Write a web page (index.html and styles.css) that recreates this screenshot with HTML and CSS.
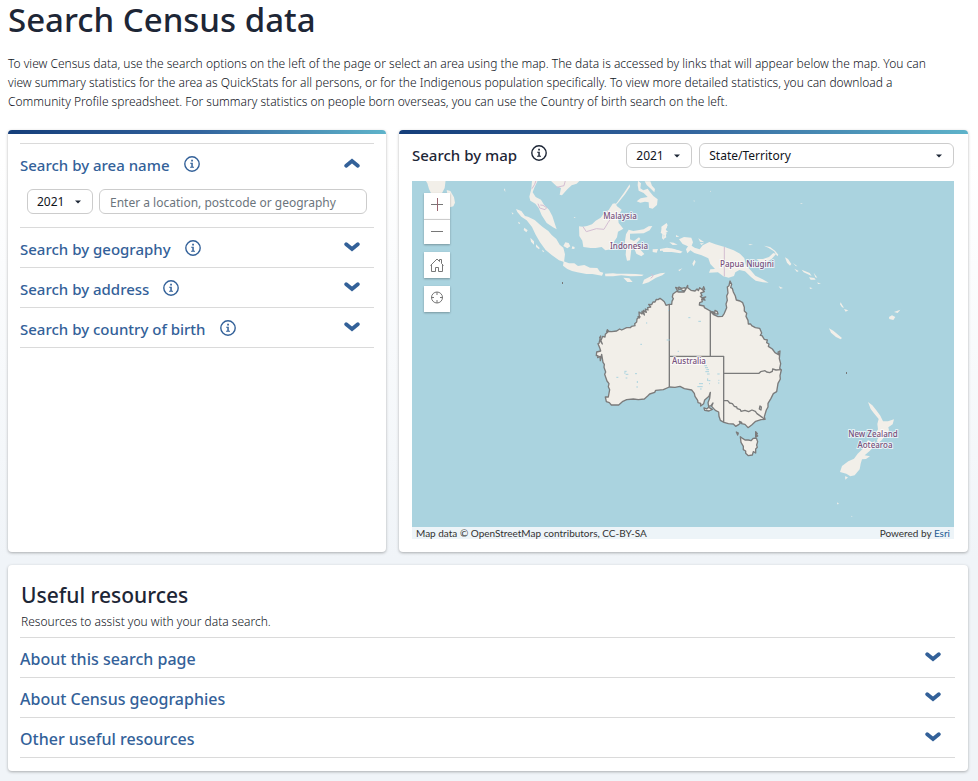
FILE: index.html
```html
<!DOCTYPE html>
<html lang="en">
<head>
<meta charset="utf-8">
<meta name="viewport" content="width=device-width, initial-scale=1">
<title>Search Census data</title>
<link rel="stylesheet" href="styles.css">
</head>
<body>
<svg class="defs" width="0" height="0" aria-hidden="true">
  <symbol id="info" viewBox="0 0 16 16"><circle cx="8" cy="8" r="7.2" fill="none" stroke="currentColor" stroke-width="1.4"/><path d="M7.2 3.8h1.7v1.6H7.2zM6.2 6.7h2.6v4h1.2v1H6.1v-1h1.2V7.7H6.200z" fill="currentColor"/></symbol>
  <symbol id="chevron" viewBox="0 0 16 10"><path d="M2.200 2.300 8 7l5.800-4.700" fill="none" stroke="currentColor" stroke-width="3.800" stroke-linecap="round"/></symbol>
  <symbol id="caret" viewBox="0 0 6 4"><path d="M0 .5h6L3 3.500z" fill="currentColor"/></symbol>
</svg>
<main class="page">
  <h1>Search Census data</h1>
  <p class="intro">To view Census data, use the search options on the left of the page or select an area using the map. The data is accessed by links that will appear below the map. You can view summary statistics for the area as QuickStats for all persons, or for the Indigenous population specifically. To view more detailed statistics, you can download a Community Profile spreadsheet. For summary statistics on people born overseas, you can use the Country of birth search on the left.</p>

  <div class="columns">
    <section class="card card-bar">
      <div class="accordion">
        <div class="item">
          <div class="row">
            <h3><button type="button" aria-expanded="true">Search by area name</button></h3>
            <button type="button" class="info" aria-label="Information"><svg><use href="#info"/></svg></button>
            <button type="button" class="chevron up" aria-label="Collapse"><svg><use href="#chevron"/></svg></button>
          </div>
          <div class="fields">
            <div class="select year"><select aria-label="Census year"><option>2021</option></select><svg><use href="#caret"/></svg></div>
            <input type="text" aria-label="Area name" placeholder="Enter a location, postcode or geography">
          </div>
        </div>
        <div class="item">
          <div class="row">
            <h3><button type="button" aria-expanded="false">Search by geography</button></h3>
            <button type="button" class="info" aria-label="Information"><svg><use href="#info"/></svg></button>
            <button type="button" class="chevron" aria-label="Expand"><svg><use href="#chevron"/></svg></button>
          </div>
        </div>
        <div class="item">
          <div class="row">
            <h3><button type="button" aria-expanded="false">Search by address</button></h3>
            <button type="button" class="info" aria-label="Information"><svg><use href="#info"/></svg></button>
            <button type="button" class="chevron" aria-label="Expand"><svg><use href="#chevron"/></svg></button>
          </div>
        </div>
        <div class="item">
          <div class="row">
            <h3><button type="button" aria-expanded="false">Search by country of birth</button></h3>
            <button type="button" class="info" aria-label="Information"><svg><use href="#info"/></svg></button>
            <button type="button" class="chevron" aria-label="Expand"><svg><use href="#chevron"/></svg></button>
          </div>
        </div>
      </div>
    </section>

    <section class="card card-bar">
      <div class="map-head">
        <h2>Search by map</h2>
        <button type="button" class="info" aria-label="Information"><svg><use href="#info"/></svg></button>
        <div class="select year"><select aria-label="Map year"><option>2021</option></select><svg><use href="#caret"/></svg></div>
        <div class="select layer"><select aria-label="Geography"><option>State/Territory</option></select><svg><use href="#caret"/></svg></div>
      </div>
      <div class="map">
        <svg class="map-canvas" viewBox="412 181 542 346" role="img" aria-label="Map of Australia and its region">
          <!-- South and south-east Asia -->
          <g class="land" transform="translate(390 120) scale(.33333)">
            <path d="M106 180H167L164 204 155 221H124L117 207 112 190zM170 210 181 213 192 232 195 248 190 259 180 262 175 240z"/>
            <path d="M426 182H443L433 203 428 217 437 231 453 239 462 254 477 269 487 288 494 310 500 328 489 322 470 309 455 286 446 264 436 251 421 242 418 230 424 207z"/>
            <path d="M482 182H569L560 191 545 196 532 208 516 226 509 224 513 204 500 199z"/>
            <path d="M378 267 394 273 405 288 414 290 434 300 450 314 459 322 475 333 485 345 499 357 509 374 520 383 525 403 522 426 507 421 486 406 467 390 450 367 437 344 426 321 410 301 394 290 382 276z"/>
            <path d="M521 424 537 430 553 430 564 438 583 435 600 443 622 444 630 455 640 458 636 467 607 462 589 462 562 457 546 453 532 447 519 437z"/>
            <path d="M567 319 578 320 591 318 606 313 617 302 632 293 645 276 656 270 668 251 676 250 681 259 695 269 690 279 684 290 686 309 700 326 684 335 681 352 672 365 664 388 646 391 635 381 617 384 602 384 580 381 577 362 568 348z"/>
            <path d="M708 343 716 329 730 333 761 328 776 319 787 318 779 331 761 340 720 341 720 358 732 363 747 352 751 357 739 370 746 383 763 402 754 409 739 401 732 383 724 388 720 421 711 422 707 404 709 382 704 370z"/>
            <path d="M744 182 753 190 751 205 760 211 773 206 780 216 790 228 803 238 801 255 788 266 777 263 776 247 765 245 751 248 740 244 752 235 773 231 761 219 746 212 743 196zM764 184H781L786 197 795 207 793 217 780 204 770 195z"/>
            <path d="M669 263 682 246 702 218 719 193 720 200 705 223 684 249z"/>
            <path d="M645 461 669 460 681 461 709 461 738 462 761 464 756 468 722 469 694 466 669 469 646 469zM700 473 718 475 728 486 712 486zM762 479 784 468 811 460 826 458 817 466 798 473 776 487 757 493z"/>
            <path d="M526 367 536 369 541 379 532 385 520 378zM547 379 554 381 553 387 545 386zM816 325 823 328 830 313 831 321 823 335 830 340 827 348 821 344 822 360 816 355 817 342 812 338zM816 389 844 386 867 391 878 395 871 400 845 396 820 396zM788 388 804 387 800 398 788 396zM838 367 851 368 863 374 848 375z"/>
            <path d="M384 305 391 309 387 313zM403 323 413 331 409 337 401 330zM421 353 432 364 432 374 423 365zM438 373 449 384 447 388 438 381zM551 291 557 291 554 294zM456 389 463 394 459 397zM365 276 371 282 367 283zM345 205 346 216 342 209z"/>
          </g>
          <!-- New Guinea and the Pacific islands -->
          <g class="land" transform="translate(660 175) scale(.33333)">
            <path d="M57 193 72 186 94 188 99 202 95 212 104 218 119 223 128 211 148 201 166 208 194 216 221 226 240 236 253 250 258 271 274 288 286 302 308 313 326 323 309 322 287 317 273 306 255 289 238 285 226 292 222 303 206 308 190 304 174 292 147 293 151 283 165 282 151 267 145 250 125 241 103 234 91 226 82 235 78 223 84 214 68 207z"/>
            <path d="M289 252 309 252 327 246 340 234 348 237 335 252 318 262 300 260zM312 212 330 216 345 227 355 239 352 244 342 229 326 219zM375 247 384 252 394 267 390 272 381 263zM399 264 412 274 407 273zM425 284 449 294 455 303 431 292zM447 307 463 309 467 314 452 314zM461 293 472 308 466 307zM472 322 483 327 474 327zM403 281 416 288 411 291z"/>
            <path d="M0 222 21 218 40 221 55 227 36 231 13 226 0 228zM4 155 20 144 23 151 17 164 24 170 16 174 19 187 11 192 14 176 5 168zM103 254 107 260 101 274 97 266zM115 190 133 202 120 200zM120 205 132 205 124 210zM48 180 58 185 48 186zM55 285 67 280 58 289zM265 208 279 208 270 211zM331 330 338 334zM356 334 369 339 361 341z"/>
            <path d="M507 460 520 467 546 489 542 493 528 486 513 473zM542 382 547 391 552 398 546 397 540 388zM552 402 565 406 557 410zM559 427 563 437zM573 448 580 456zM552 372 554 383zM687 426 696 421 706 426 700 435 688 432zM702 411 721 404 713 414zM530 325 534 331zM449 337 458 340 450 342zM575 438 577 443zM549 467 557 470zM102 74 104 80 101 79zM150 47 153 49 150 51zM422 84 429 87 422 87z"/>
          </g>
          <!-- New Zealand -->
          <g class="land" transform="translate(820 380) scale(.33333)">
            <path d="M144 66 157 76 169 91 181 107 189 124 204 124 222 118 218 133 205 142 207 151 199 162 185 181 174 190 171 181 178 168 166 161 174 148 172 132 176 117 163 101 152 87zM144 180 158 188 165 181 160 201 149 213 134 226 150 229 138 237 126 238 122 251 119 268 104 286 91 289 79 281 60 276 66 258 85 244 102 236 113 221 130 205zM75 289 84 292 76 299zM52 367 57 372 51 373zM94 407 98 410 94 410z"/>
          </g>
          <g class="boundary" transform="translate(390 120) scale(.33333)">
            <path d="M438 182 434 193 426 206M444 251 449 264 465 269 470 263 459 256 451 255M500 202 522 197 526 182M579 320 589 335 619 326 642 328 654 308 671 283 655 291 652 272M784 462 790 468 782 475M1003 381V469"/>
          </g>
          <path class="island-dot" d="M562 282h1v2h-1zM846 372h1v2h-1z"/>
          <!-- Australian states and territories -->
          <g class="states" transform="translate(585 275) scale(.33333)">
            <path d="M253 88 243 91 238 80 232 75 225 70 219 74 214 73 210 81 204 81 200 89 191 88 197 96 188 98 189 105 181 102 184 112 175 106 178 120 171 109 171 117 162 111 163 125 156 132 155 141 149 146 150 152 140 154 136 158 125 158 110 165 104 162 95 168 80 170 71 169 61 178 60 186 53 184 47 199 52 207 44 188 47 183 42 205 39 206 44 218 47 228 35 231 34 242 39 242 38 248 45 244 46 257 50 238 54 262 58 268 57 277 62 291 59 298 66 318 72 326 70 335 74 344 70 366 61 366 64 380 73 383 79 390 101 390 112 380 125 374 145 372 160 374 178 372 188 363 194 357 209 352 212 346 235 344 253 336 270 337 285 334 298 341 320 345 328 355 330 364 338 376 339 383 347 385 347 393 356 386 359 375 372 364 376 352 374 370 369 383 371 394 378 392 384 384 380 394 391 406 401 411 402 424 406 436 417 442 430 446 445 447 452 454 462 448 466 445 463 439 470 442 470 446 480 448 489 458 500 450 512 439 528 434 540 433 538 425 544 405 549 396 549 385 558 370 565 356 575 350 579 325 586 312 585 302 589 285 584 280 587 266 583 251 584 239 585 228 579 231 582 240 570 233 562 222 550 214 552 207 545 203 547 195 538 193 531 182 526 181 530 174 524 160 511 158 500 152 497 147 490 147 489 136 483 124 485 115 478 108 478 97 473 83 465 78 454 75 451 63 445 51 442 40 437 38 440 28 435 18 432 32 427 36 429 54 425 63 427 76 423 87 425 98 418 115 412 124 399 125 386 119 379 112 384 110 390 116 399 117 397 110 390 106 389 116 376 108 358 98 357 93 343 90 344 83 352 80 350 73 360 75 355 71 362 66 351 69 346 64 351 62 347 54 358 50 354 46 359 43 356 35 352 44 344 38 340 47 336 42 330 48 318 46 308 38 308 31 302 43 300 38 290 40 282 36 281 40 272 37 277 46 285 42 296 48 302 44 297 51 281 51 275 49 264 57 262 66 265 71 261 79 260 88 254 88z"/>
            <path d="M466 485 474 491 480 495 490 495 498 497 505 490 514 489 518 500 515 510 517 517 512 522 512 534 505 530 502 540 490 542 482 535 482 528 475 524 475 514 468 502zM357 399 365 402 371 397 382 403 372 408 359 406zM454 471 460 474 458 480zM512 470 517 476 513 477 518 483 512 485zM525 393 529 396 528 405 523 402zM65 171 67 164 70 168zM163 129 159 125 165 125z"/>
            <path fill="none" d="M253 88V336M253 244H416V442M376 108V244M416 295H522L527 290 540 287 545 291 554 293 562 289 563 282 573 285 589 284M417 376 428 377 434 384 442 386 448 394 455 396 457 401 466 404 468 409 480 406 491 410 501 405 511 409 516 416 540 433"/>
          </g>
          <g class="lakes" transform="translate(585 275) scale(.33333)"><path d="M358 272h8M360 278h9M364 284h8M361 290h11M366 297h8M368 310v8M370 317h6M342 326h12M337 335h16M372 326h3M345 342h5M397 297h7M400 316h3M399 324h4M118 289h7M122 298h8M117 294h5M150 296h6M94 307h6M122 309h5M310 128h6M340 139h8M245 195h9M166 208h5M249 106h3M278 229h4M157 318v6M154 336h5M185 142v4"/></g>
          <g class="labels">
            <text x="620" y="219">Malaysia</text>
            <text x="629" y="249">Indonesia</text>
            <text x="747" y="267">Papua Niugini</text>
            <text x="689" y="364">Australia</text>
            <text x="873" y="437">New Zealand</text>
            <text x="875" y="448">Aotearoa</text>
          </g>
        </svg>
        <div class="map-tools">
          <div class="zoom">
            <button type="button" aria-label="Zoom in"><svg viewBox="0 0 16 16"><path d="M2 6.500h12" stroke="#777"/><path d="M8.500 0v13" stroke="#9a6670"/></svg></button>
            <button type="button" aria-label="Zoom out"><svg viewBox="0 0 16 16"><path d="M2 7.500h12" stroke="#777"/></svg></button>
          </div>
          <button type="button" aria-label="Default map view"><svg viewBox="0 0 16 16"><path d="M1.500 8.500 8 2l2.500 2.500V2.500h2v4l2 2M2.500 7.500v7h4v-4h3v4h4v-7" fill="none" stroke="#777"/></svg></button>
          <button type="button" aria-label="Find my location"><svg viewBox="0 0 16 16"><circle cx="8" cy="6.500" r="5.500" fill="none" stroke="#777"/><path d="M8 1v3M8 9v3M2 6.500h3M11 6.500h3" stroke="#777"/></svg></button>
        </div>
        <div class="attribution"><span>Map data © OpenStreetMap contributors, CC-BY-SA</span><span>Powered by <a href="#">Esri</a></span></div>
      </div>
    </section>
  </div>

  <section class="card resources">
    <h2>Useful resources</h2>
    <p>Resources to assist you with your data search.</p>
    <div class="accordion">
      <div class="item"><div class="row"><h3><button type="button" aria-expanded="false">About this search page</button></h3><button type="button" class="chevron" aria-label="Expand"><svg><use href="#chevron"/></svg></button></div></div>
      <div class="item"><div class="row"><h3><button type="button" aria-expanded="false">About Census geographies</button></h3><button type="button" class="chevron" aria-label="Expand"><svg><use href="#chevron"/></svg></button></div></div>
      <div class="item"><div class="row"><h3><button type="button" aria-expanded="false">Other useful resources</button></h3><button type="button" class="chevron" aria-label="Expand"><svg><use href="#chevron"/></svg></button></div></div>
    </div>
  </section>
</main>
</body>
</html>
```
FILE: styles.css
```css
* { box-sizing: border-box; }

body {
  margin: 0;
  font: 300 12px/19px "Noto Sans", sans-serif;
  color: #10141c;
  background: #f0f4f8 linear-gradient(#fff 0, #fff 160px, #f0f4f8 560px) no-repeat;
}

h1, h2, h3, p { margin: 0; }
h1, h2 { color: #1d2636; }

button {
  padding: 0;
  border: 0;
  background: none;
  font: inherit;
  color: inherit;
  cursor: pointer;
}

.defs { display: block; }

.page { padding: 0 10px 11px 8px; }

h1 { font-size: 33px; line-height: 40px; font-weight: 500; }

.intro { margin: 14px 0 19px; padding-right: 20px; }

.columns {
  display: grid;
  grid-template-columns: 378fr 569fr;
  gap: 13px;
  margin-bottom: 13px;
}

.card {
  background: #fff;
  border-radius: 4px;
  box-shadow: 0 1px 3px rgba(0, 0, 0, .3);
  overflow: hidden;
  padding: 13px 14px 13px 13px;
}

.card-bar { padding-top: 0; }

.card-bar::before {
  content: "";
  display: block;
  height: 4px;
  margin: 0 -14px 0 -13px;
  background: linear-gradient(90deg, #153e7a, #32639d 50%, #5eb3ca);
}

.accordion { border-top: 1px solid #dadada; margin: 0 -1px; color: #336199; }
.card-bar .accordion { margin: 9px -2px 0 -1px; }
.item { border-bottom: 1px solid #dadada; }

.row { display: flex; align-items: center; height: 39px; }
.row h3 { font-size: 15px; line-height: 24px; font-weight: 500; padding-top: 2px; }

.info { display: flex; margin-left: 14px; }
.info svg { width: 16px; height: 16px; }

.chevron { display: flex; margin-left: auto; padding: 0 14px 2px 0; }
.chevron svg { width: 16px; height: 10px; }
.up svg { transform: rotate(180deg); }

.fields { display: flex; gap: 6px; padding: 6px 7px 13px; }

.select { display: grid; grid-template-columns: 1fr 6px 12px; align-items: center; }
.select select { grid-area: 1 / 1 / 2 / 4; }
.select svg { grid-area: 1 / 2; width: 6px; height: 4px; color: #1d2636; pointer-events: none; }
.year { width: 66px; }

select, input {
  appearance: none;
  min-width: 0;
  width: 100%;
  height: 25px;
  margin: 0;
  padding: 1px 9px 0;
  border: 1px solid #ccc;
  border-radius: 6px;
  background: #fff;
  font: 400 12px/20px "Noto Sans", sans-serif;
  color: #10141c;
}

.fields input { flex: 1; padding-left: 10px; }
input::placeholder { color: #6c757d; opacity: 1; }

.map-head { display: flex; align-items: flex-start; height: 47px; padding-top: 9px; }
.map-head h2 { font-size: 15px; line-height: 24px; font-weight: 500; }
.map-head .info { margin-top: 2px; color: #1d2636; }
.map-head .year { margin: 0 7px 0 auto; }
.layer { width: 47%; }

.map { position: relative; display: flex; flex-direction: column; background: #aad3df; }
.map-canvas { display: block; width: 100%; }
.land { fill: #f2efe9; }
.boundary { fill: none; stroke: #d3bdd2; stroke-width: 3; }
.island-dot { fill: #777; }
.states { fill: #f2efe9; stroke: #7b7b7b; stroke-width: 4; stroke-linejoin: round; }
.lakes { stroke: #aad3df; stroke-width: 3; }
.labels {
  font: 500 8px "Noto Sans", sans-serif;
  text-anchor: middle;
  fill: #77507b;
  stroke: #fff;
  stroke-opacity: .7;
  stroke-width: 2px;
  paint-order: stroke;
}

.map-tools { position: absolute; top: 12px; left: 12px; display: grid; gap: 8px; }
.map-tools button {
  display: grid;
  place-items: center;
  width: 26px;
  height: 26px;
  background: #fff;
  box-shadow: 0 1px 2px rgba(0, 0, 0, .3);
}
.map-tools svg { width: 16px; height: 16px; }
.zoom { display: grid; }
.zoom button + button { height: 25px; border-top: 1px solid #ccc; }

.attribution {
  display: flex;
  justify-content: space-between;
  padding: 0 4px;
  background: #edf4f8;
  font: 400 10px/12px Lato, sans-serif;
  color: #323232;
}
.attribution a { color: #265c94; text-decoration: none; }

.resources h2 { font-size: 21px; line-height: 30px; font-weight: 500; padding-top: 2px; }
.resources p { padding: 2px 0 6px; }
.resources .row h3 { font-size: 16px; }
```
